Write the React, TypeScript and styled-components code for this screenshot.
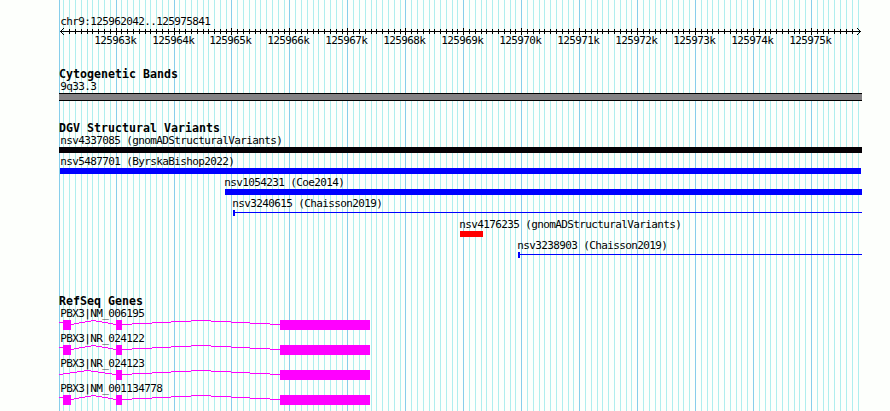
import React from 'react';
import styled, { createGlobalStyle } from 'styled-components';

const WIDTH = 890;
const HEIGHT = 411;
const LEFT = 59;
const RIGHT = 858;

const FIRST_TICK = 115.58;
const KB = 57.95;

const tickX = (step: number) => Math.round(FIRST_TICK + (step * KB) / 10);

// one step is 100 bp, step 0 is 125963k
const steps = Array.from({ length: 137 }, (_, i) => i - 9);

type Glyph = 'bar' | 'line';

const variants: { name: string; start: number; end: number; color: string; glyph: Glyph; labelX?: number }[] = [
    { name: 'nsv4337085 (gnomADStructuralVariants)', start: 59, end: 862, color: '#040004', glyph: 'bar', labelX: 60 },
    { name: 'nsv5487701 (ByrskaBishop2022)', start: 60, end: 861, color: '#0000ff', glyph: 'bar', labelX: 60 },
    { name: 'nsv1054231 (Coe2014)', start: 225, end: 862, color: '#0000ff', glyph: 'bar' },
    { name: 'nsv3240615 (Chaisson2019)', start: 233, end: 862, color: '#0000ff', glyph: 'line' },
    { name: 'nsv4176235 (gnomADStructuralVariants)', start: 460, end: 483, color: '#ff0000', glyph: 'bar' },
    { name: 'nsv3238903 (Chaisson2019)', start: 518, end: 862, color: '#0000ff', glyph: 'line' },
];

const genes = [
    { name: 'PBX3|NM_006195', firstExon: true },
    { name: 'PBX3|NR_024122', firstExon: true },
    { name: 'PBX3|NR_024123', firstExon: false },
    { name: 'PBX3|NM_001134778', firstExon: true },
];

const Grid = () => (
    <GridSvg width={WIDTH} height={HEIGHT} shapeRendering="crispEdges">
        {steps.map((s) => (
            s % 10 !== 0 && <rect key={s} x={tickX(s)} y={0} width={1} height={HEIGHT} fill="#afeeee" />
        ))}
        <rect x={RIGHT} y={0} width={1} height={HEIGHT} fill="#afeeee" />
        {steps.map((s) => (
            s % 10 === 0 && <rect key={s} x={tickX(s)} y={0} width={1} height={HEIGHT} fill="#87ceeb" />
        ))}
        <rect x={LEFT} y={0} width={1} height={HEIGHT} fill="#87ceeb" />
    </GridSvg>
);

const Ruler = () => (
    <RulerSvg width={WIDTH} height={37}>
        <g shapeRendering="crispEdges" fill="#000">
            <rect x={60} y={6} width={801} height={1} />
            {steps.filter((s) => tickX(s) > 64).map((s) => (
                s % 10 === 0
                    ? <rect key={s} x={tickX(s)} y={3} width={1} height={7} />
                    : <rect key={s} x={tickX(s)} y={4} width={1} height={5} />
            ))}
            {[1, 2, 3].map((d) => (
                <React.Fragment key={d}>
                    <rect x={60 + d} y={6 - d} width={1} height={1} />
                    <rect x={60 + d} y={6 + d} width={1} height={1} />
                    <rect x={860 - d} y={6 - d} width={1} height={1} />
                    <rect x={860 - d} y={6 + d} width={1} height={1} />
                </React.Fragment>
            ))}
        </g>
        {steps.filter((s) => s % 10 === 0).map((s) => (
            <text key={s} x={tickX(s) - 21.7} y={19}>{125963 + s / 10}k</text>
        ))}
    </RulerSvg>
);

// a hat from start to end, drawn as level runs one pixel apart
const hat = (start: number, end: number) => {
    const run = (end - start) / 16;
    let d = `M${start} 4.5`;
    [4, 3, 2, 1, 0, 1, 2, 3, 4].forEach((y, i) => {
        const to = Math.round(start + run * (2 * i + 1));
        const from = i === 0 ? start : Math.round(start + run * (2 * i - 1));
        d += `M${from} ${y + 0.5}H${Math.min(to, end)}`;
    });
    return d;
};

const Gene = ({ firstExon }: { firstExon: boolean }) => (
    <GeneSvg width={WIDTH} height={10} shapeRendering="crispEdges">
        <g fill="none" stroke="#ff00ff">
            {firstExon && <path d="M59 2.5H63" />}
            <path d={firstExon ? hat(71, 116) : hat(59, 116)} />
            <path d={hat(122, 280)} />
        </g>
        <g fill="#ff00ff">
            {firstExon && <rect x={63} y={0} width={8} height={10} />}
            <rect x={116} y={0} width={6} height={10} />
            <rect x={280} y={0} width={90} height={10} />
        </g>
    </GeneSvg>
);

const App = () => {
    return (
        <Browser>
            <GlobalStyle />
            <Grid />
            <Tracks>
                <Position>chr9:125962042..125975841</Position>
                <Ruler />
                <Track $gap={15}>
                    <Title>Cytogenetic Bands</Title>
                    <Label $x={60}>9q33.3</Label>
                    <Band />
                </Track>
                <Track $gap={31}>
                    <Title>DGV Structural Variants</Title>
                    {variants.map((v) => (
                        <React.Fragment key={v.name}>
                            <Label $x={v.labelX ?? v.start - 1}>{v.name}</Label>
                            {v.glyph === 'bar'
                                ? <Bar $start={v.start} $end={v.end} $color={v.color} />
                                : <Span $start={v.start} $end={v.end} $color={v.color} />}
                        </React.Fragment>
                    ))}
                </Track>
                <Track $gap={0}>
                    <Title>RefSeq Genes</Title>
                    {genes.map((g) => (
                        <React.Fragment key={g.name}>
                            <Label $x={60}>{g.name}</Label>
                            <Gene firstExon={g.firstExon} />
                        </React.Fragment>
                    ))}
                </Track>
            </Tracks>
        </Browser>
    );
};
export default App;

const GlobalStyle = createGlobalStyle`
  body {
    margin: 0;
    background: #fdfffc;
    overflow: hidden;
  }
`;

const Browser = styled.div`
  position: relative;
  width: ${WIDTH}px;
  height: ${HEIGHT}px;
  overflow: hidden;
  background: #fdfffc;
  color: #000;
  font-family: "DejaVu Sans Mono", "Liberation Mono", monospace;
  font-size: 11px;
  letter-spacing: -0.622px;
`;

const GridSvg = styled.svg`
  position: absolute;
  top: 0;
  left: 0;
`;

const Tracks = styled.div`
  position: relative;
  display: flex;
  flex-direction: column;
  padding-top: 13px;
`;

const Label = styled.div<{ $x: number }>`
  height: 15px;
  line-height: 17px;
  margin-left: ${({ $x }) => $x + 0.3}px;
  white-space: nowrap;
`;

const Position = styled(Label).attrs({ $x: 60 })`
  height: 12px;
`;

const RulerSvg = styled.svg`
  display: block;
`;

const Track = styled.section<{ $gap: number }>`
  display: flex;
  flex-direction: column;
  margin-bottom: ${({ $gap }) => $gap}px;
`;

const Title = styled.div`
  height: 16px;
  line-height: 24px;
  margin-left: 59px;
  font-size: 11.6px;
  font-weight: bold;
  letter-spacing: 0.016px;
  white-space: nowrap;
`;

const Band = styled.div`
  box-sizing: border-box;
  width: 803px;
  height: 8px;
  margin-left: ${LEFT}px;
  border: solid #000;
  border-width: 1px 0;
  background: #848284;
`;

const Bar = styled.div<{ $start: number; $end: number; $color: string }>`
  width: ${({ $start, $end }) => $end - $start}px;
  height: 6px;
  margin-left: ${({ $start }) => $start}px;
  background: ${({ $color }) => $color};
`;

const Span = styled(Bar)`
  box-sizing: border-box;
  border-left: 2px solid ${({ $color }) => $color};
  background: linear-gradient(${({ $color }) => `${$color}, ${$color}`}) 0 2px / 100% 1px no-repeat;
`;

const GeneSvg = styled.svg`
  display: block;
`;
